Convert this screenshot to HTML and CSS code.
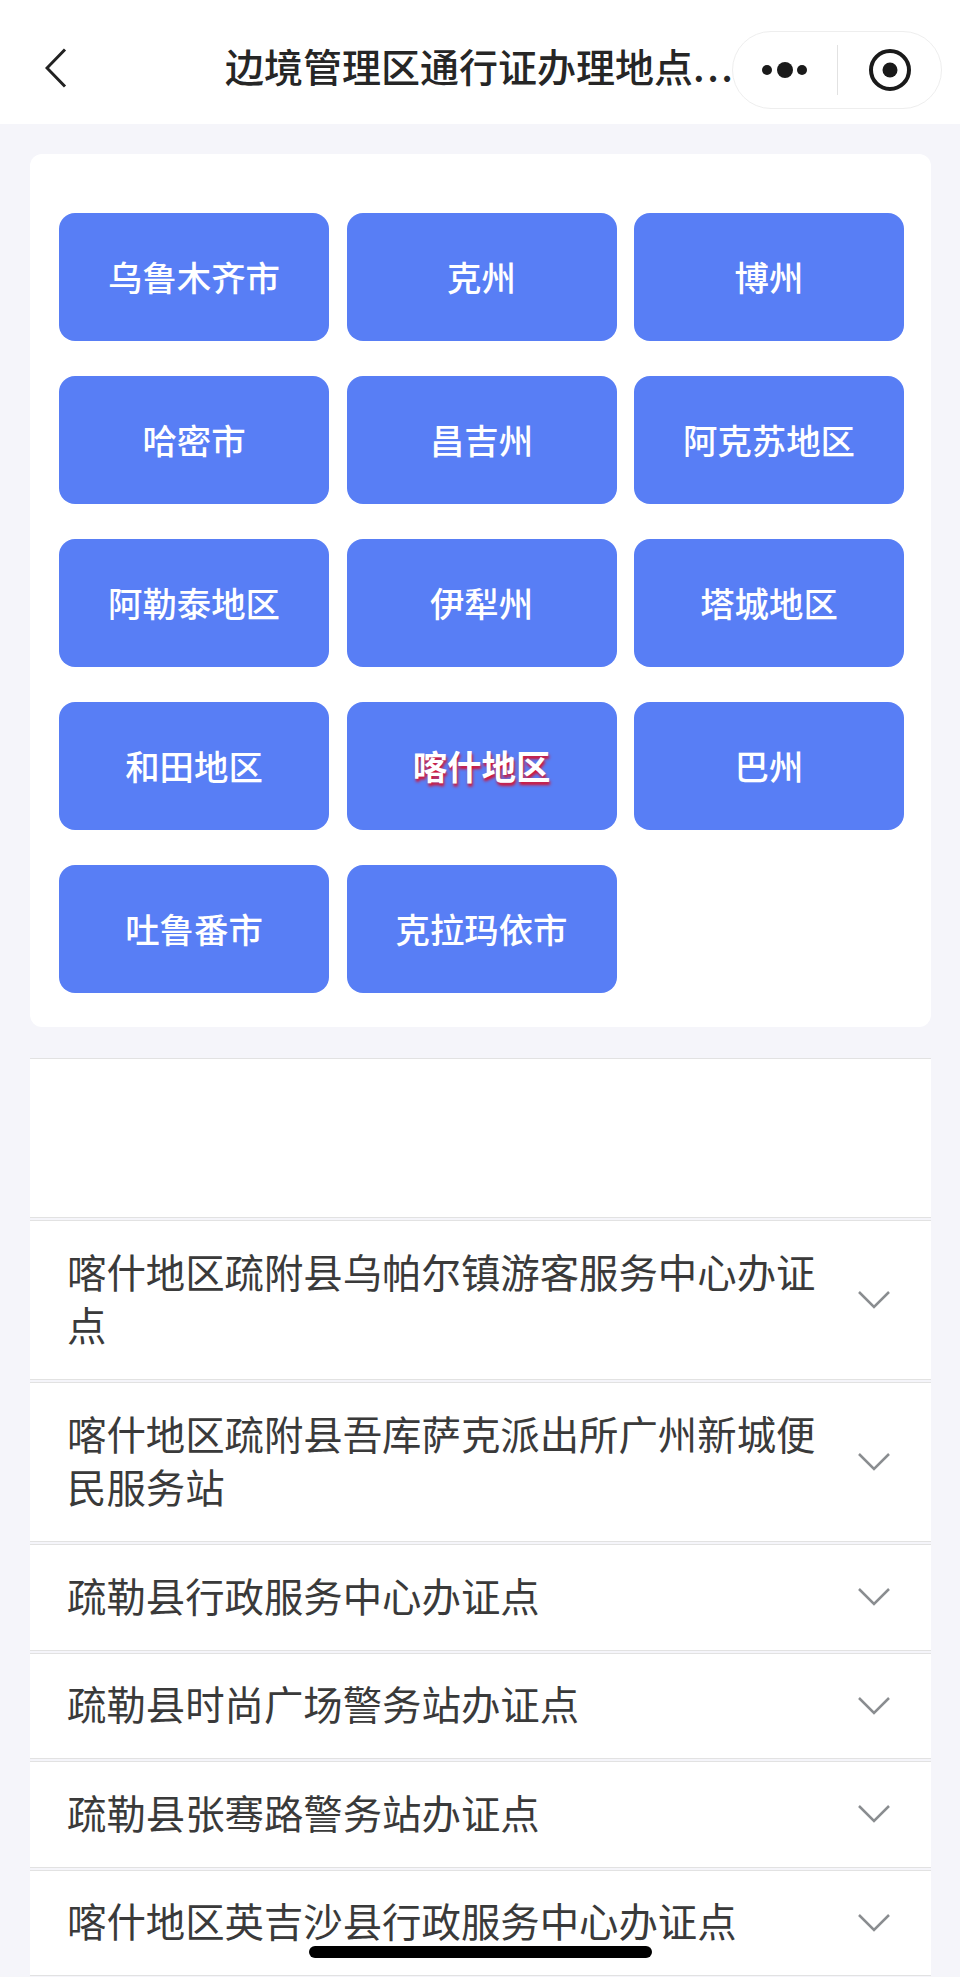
FILE: index.html
```html
<!DOCTYPE html>
<html lang="zh-CN">
<head>
    <meta charset="UTF-8">
    <meta name="viewport" content="width=device-width, initial-scale=1.0">
    <title>边境管理区通行证办理地点</title>
    <link rel="stylesheet" href="styles.css">
</head>
<body>
    <div class="page">
        <header class="nav">
            <svg class="back" width="22" height="40" viewBox="0 0 22 40"><path d="M20 1.500 2 20l18 18.500" fill="none" stroke="#222" stroke-width="3"/></svg>
            <h1 class="nav-title">边境管理区通行证办理地点<span class="dots">...</span></h1>
            <div class="capsule">
                <svg width="48" height="18" viewBox="0 0 48 18"><circle cx="5" cy="9" r="5" fill="#1a1a1a"/><circle cx="23" cy="9" r="8" fill="#1a1a1a"/><circle cx="40" cy="9" r="5" fill="#1a1a1a"/></svg>
                <span class="capsule-line"></span>
                <svg width="44" height="44" viewBox="0 0 44 44"><circle cx="22" cy="22" r="19" fill="none" stroke="#1a1a1a" stroke-width="4"/><circle cx="22" cy="22" r="7.500" fill="#1a1a1a"/></svg>
            </div>
        </header>

        <main class="content">
            <section class="card">
                <a class="city">乌鲁木齐市</a>
                <a class="city">克州</a>
                <a class="city">博州</a>
                <a class="city">哈密市</a>
                <a class="city">昌吉州</a>
                <a class="city">阿克苏地区</a>
                <a class="city">阿勒泰地区</a>
                <a class="city">伊犁州</a>
                <a class="city">塔城地区</a>
                <a class="city">和田地区</a>
                <a class="city active">喀什地区</a>
                <a class="city">巴州</a>
                <a class="city">吐鲁番市</a>
                <a class="city">克拉玛依市</a>
            </section>

            <section class="list">
                <div class="item empty"></div>
                <div class="item">
                    <span class="item-name">喀什地区疏附县乌帕尔镇游客服务中心办证点</span>
                    <svg class="arrow" width="32" height="18" viewBox="0 0 32 18"><path d="M1 1l15 15L31 1" fill="none" stroke="#8a8d90" stroke-width="2.500"/></svg>
                </div>
                <div class="item">
                    <span class="item-name">喀什地区疏附县吾库萨克派出所广州新城便民服务站</span>
                    <svg class="arrow" width="32" height="18" viewBox="0 0 32 18"><path d="M1 1l15 15L31 1" fill="none" stroke="#8a8d90" stroke-width="2.500"/></svg>
                </div>
                <div class="item">
                    <span class="item-name">疏勒县行政服务中心办证点</span>
                    <svg class="arrow" width="32" height="18" viewBox="0 0 32 18"><path d="M1 1l15 15L31 1" fill="none" stroke="#8a8d90" stroke-width="2.500"/></svg>
                </div>
                <div class="item">
                    <span class="item-name">疏勒县时尚广场警务站办证点</span>
                    <svg class="arrow" width="32" height="18" viewBox="0 0 32 18"><path d="M1 1l15 15L31 1" fill="none" stroke="#8a8d90" stroke-width="2.500"/></svg>
                </div>
                <div class="item">
                    <span class="item-name">疏勒县张骞路警务站办证点</span>
                    <svg class="arrow" width="32" height="18" viewBox="0 0 32 18"><path d="M1 1l15 15L31 1" fill="none" stroke="#8a8d90" stroke-width="2.500"/></svg>
                </div>
                <div class="item">
                    <span class="item-name">喀什地区英吉沙县行政服务中心办证点</span>
                    <svg class="arrow" width="32" height="18" viewBox="0 0 32 18"><path d="M1 1l15 15L31 1" fill="none" stroke="#8a8d90" stroke-width="2.500"/></svg>
                </div>
            </section>
        </main>

        <div class="home-bar"></div>
    </div>
</body>
</html>
```

FILE: styles.css
```css
* {
    box-sizing: border-box;
}

body {
    margin: 0;
    font-family: "Noto Sans CJK SC", "Noto Sans", sans-serif;
    background-color: #f5f5fa;
}

.page {
    position: relative;
    height: 1977px;
    overflow: hidden;
}

.nav {
    position: relative;
    display: flex;
    align-items: center;
    height: 124px;
    padding: 0 18px 0 45px;
    background-color: #fff;
}

.back {
    flex: none;
    margin-top: 12px;
}

.nav-title {
    margin: 6px 0 0 158px;
    flex: 1;
    font-size: 39px;
    font-weight: 500;
    line-height: 54px;
    color: #262626;
    white-space: nowrap;
}

.dots {
    letter-spacing: 2.500px;
}

.capsule {
    position: absolute;
    top: 31px;
    right: 18px;
    display: flex;
    align-items: center;
    width: 210px;
    height: 78px;
    padding-left: 29px;
    border: 1px solid #eee;
    border-radius: 39px;
    background-color: #fff;
}

.capsule-line {
    width: 1px;
    height: 50px;
    margin: 0 30px 0 27px;
    background-color: #e2e2e2;
}

.content {
    padding: 30px 29px 0 30px;
}

.card {
    display: grid;
    grid-template-columns: repeat(3, 270px);
    column-gap: 17.500px;
    row-gap: 35px;
    padding: 59px 0 34px 29px;
    border-radius: 12px;
    background-color: #fff;
}

.city {
    display: flex;
    align-items: center;
    justify-content: center;
    height: 128px;
    padding-bottom: 3px;
    border-radius: 16px;
    background-color: #587ef5;
    color: #fff;
    font-size: 34.400px;
    font-weight: 500;
}

.city.active {
    font-weight: 700;
    text-shadow: 1px 3px 3px #d9102e;
}

.list {
    margin-top: 31px;
}

.item {
    display: flex;
    align-items: center;
    padding: 25.500px 41px 25.500px 37px;
    margin-bottom: 2px;
    border-top: 1px solid #e2e2e2;
    border-bottom: 1px solid #e2e2e2;
    background-color: #fff;
    color: #3a3a3a;
    font-size: 39.400px;
    line-height: 53.500px;
}

.item.empty {
    height: 160px;
}

.item-name {
    flex: 1;
    max-width: 770px;
    margin: -3px auto 3px 0;
}

.arrow {
    flex: none;
}

.home-bar {
    position: absolute;
    left: 309px;
    top: 1946px;
    width: 343px;
    height: 12px;
    border-radius: 6px;
    background-color: #000;
}
```
